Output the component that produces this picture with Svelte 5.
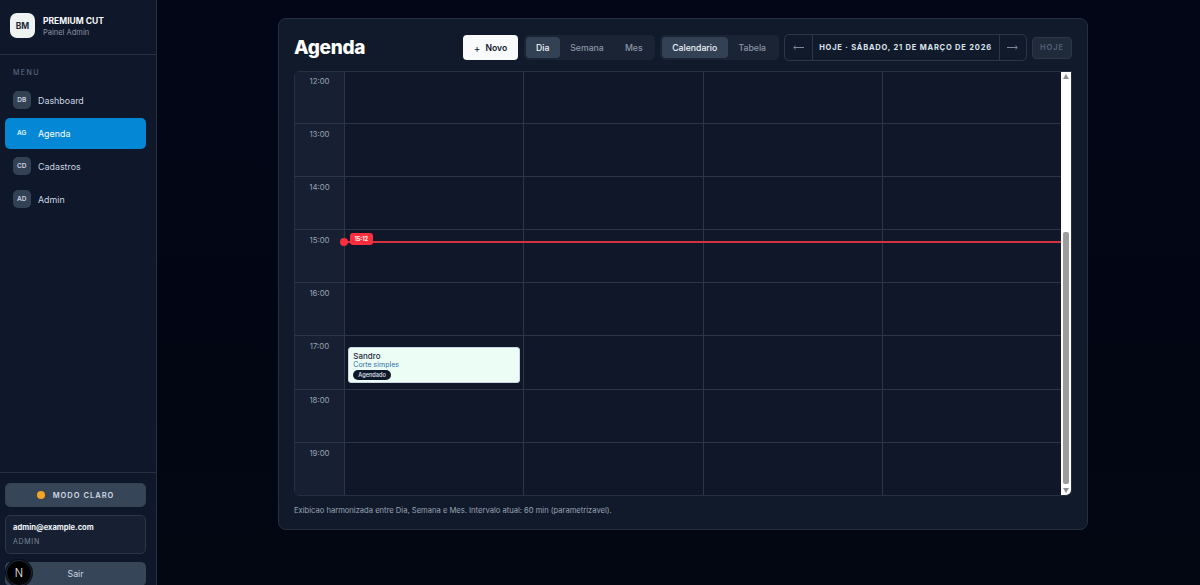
<script lang="ts">
  const nav = [
    { code: 'DB', label: 'Dashboard' },
    { code: 'AG', label: 'Agenda', active: true },
    { code: 'CD', label: 'Cadastros' },
    { code: 'AD', label: 'Admin' },
  ];
  const hours = ['12:00', '13:00', '14:00', '15:00', '16:00', '17:00', '18:00', '19:00'];
  const columns = [0, 1, 2, 3];
</script>

<div class="shell">
  <aside class="sidebar">
    <div class="brand">
      <div class="brand-logo">BM</div>
      <div>
        <div class="brand-name">PREMIUM CUT</div>
        <div class="brand-sub">Painel Admin</div>
      </div>
    </div>

    <div class="menu-title">MENU</div>
    <nav class="menu">
      {#each nav as item}
        <a class="menu-item" class:active={item.active} href="#top">
          <span class="menu-code">{item.code}</span>
          <span>{item.label}</span>
        </a>
      {/each}
    </nav>

    <div class="side-bottom">
      <button class="theme-btn"><span class="sun"></span>MODO CLARO</button>
      <div class="user-box">
        <div class="user-mail">admin@example.com</div>
        <div class="user-role">ADMIN</div>
      </div>
      <button class="logout">Sair</button>
    </div>
  </aside>

  <main class="main">
    <section class="card">
      <header class="toolbar">
        <h1>Agenda</h1>
        <div class="tools">
          <button class="new-btn"><span class="plus">+</span>Novo</button>
          <div class="segment">
            <button class="seg seg-dia on">Dia</button>
            <button class="seg seg-semana">Semana</button>
            <button class="seg seg-mes">Mes</button>
          </div>
          <div class="segment">
            <button class="seg seg-cal on">Calendario</button>
            <button class="seg seg-tab">Tabela</button>
          </div>
          <div class="date-nav">
            <button class="arrow" aria-label="Anterior">
              <svg width="11" height="5" viewBox="0 0 11 5"><path d="M11 2.5H.8M2.6.8.8 2.5l1.8 1.7" fill="none" stroke="#94a3b8" stroke-width=".8" /></svg>
            </button>
            <div class="date-label">HOJE · SÁBADO, 21 DE MARÇO DE 2026</div>
            <button class="arrow" aria-label="Proximo">
              <svg width="11" height="5" viewBox="0 0 11 5"><path d="M0 2.5h10.2M8.4.8l1.8 1.7-1.8 1.7" fill="none" stroke="#94a3b8" stroke-width=".8" /></svg>
            </button>
          </div>
          <button class="today" disabled>HOJE</button>
        </div>
      </header>

      <div class="calendar">
        <div class="viewport">
          <div class="grid">
            {#each hours as hour}
              <div class="time">{hour}</div>
              {#each columns as c}
                <div class="cell" class:last={c === 3}></div>
              {/each}
            {/each}

            <div class="now-line">
              <span class="now-dot"></span>
              <span class="now-tag">15:12</span>
            </div>

            <div class="event">
              <div class="event-name">Sandro</div>
              <div class="event-service">Corte simples</div>
              <span class="event-status">Agendado</span>
            </div>
          </div>
        </div>
        <div class="scrollbar">
          <span class="sb-up"></span>
          <div class="sb-track"><div class="sb-thumb"></div></div>
          <span class="sb-down"></span>
        </div>
      </div>

      <p class="note">Exibicao harmonizada entre Dia, Semana e Mes. Intervalo atual: 60 min (parametrizavel).</p>
    </section>
  </main>

  <div class="next-badge">N</div>
</div>

<style>
  :global(body) { margin: 0; background: #020617; font-family: Inter, "Liberation Sans", sans-serif; }
  button { font-family: inherit; cursor: pointer; }
  .shell { display: flex; width: 1200px; height: 585px; overflow: hidden; position: relative; background: linear-gradient(180deg, #020617 0%, #030712 100%); }

  .sidebar { width: 156px; height: 585px; flex: none; display: flex; flex-direction: column; background: #0f172a; border-right: 1px solid #253040; }
  .brand { height: 55px; box-sizing: border-box; padding: 13px 10px 0; display: flex; gap: 8px; border-bottom: 1px solid #253040; flex: none; }
  .brand-logo { width: 25px; height: 25px; border-radius: 7px; background: #eef2f1; color: #1e293b; display: flex; align-items: center; justify-content: center; font-size: 8.5px; font-weight: 700; }
  .brand-name { font-size: 8.5px; font-weight: 700; color: #f8fafc; line-height: 11px; margin-top: 2.5px; }
  .brand-sub { font-size: 7.5px; color: #8a95a6; line-height: 10px; margin-top: 1px; }

  .menu-title { font-size: 7px; letter-spacing: 1.5px; color: #64748b; margin: 13px 0 0 13px; line-height: 10px; }
  .menu { display: flex; flex-direction: column; gap: 2.5px; padding: 0 10px 0 5px; margin-top: 7px; }
  .menu-item { height: 30.5px; display: flex; align-items: center; gap: 7.5px; padding-left: 8px; border-radius: 5px; font-size: 8.9px; color: #cbd5e1; text-decoration: none; }
  .menu-item.active { background: #0488d6; color: #fff; }
  .menu-code { width: 17.5px; height: 18px; border-radius: 5px; background: #334155; color: #cbd5e1; font-size: 6.5px; font-weight: 600; display: flex; align-items: center; justify-content: center; }
  .menu-item.active .menu-code { background: transparent; color: #e0f2fe; }

  .side-bottom { margin-top: auto; border-top: 1px solid #253040; padding: 10px 10px 0 5px; display: flex; flex-direction: column; gap: 8px; height: 113px; box-sizing: border-box; }
  .theme-btn { height: 24px; flex: none; display: flex; align-items: center; justify-content: center; gap: 8px; background: #374558; border: 1px solid #334155; border-radius: 5px; color: #d1d9e3; font-size: 7.5px; font-weight: 600; letter-spacing: 1px; padding: 0; }
  .sun { width: 8px; height: 8px; border-radius: 50%; background: #f5a524; }
  .user-box { height: 39px; flex: none; box-sizing: border-box; border: 1px solid #2b3647; border-radius: 5px; background: #162032; padding: 7px 7px; }
  .user-mail { font-size: 7.6px; font-weight: 700; color: #f1f5f9; line-height: 10px; }
  .user-role { font-size: 7px; letter-spacing: 0.7px; color: #7c8798; line-height: 9px; margin-top: 4px; }
  .logout { height: 24px; flex: none; background: #374558; border: none; border-radius: 5px; color: #cbd5e1; font-size: 8.8px; padding: 0; margin-top: -0.5px; }

  .main { flex: 1; min-width: 0; padding: 18px 112px 0 121px; box-sizing: border-box; }
  .card { height: 512px; box-sizing: border-box; background: #111a2b; border: 1px solid #253040; border-radius: 8px; padding: 15px 15px 0; display: flex; flex-direction: column; }

  .toolbar { display: flex; align-items: center; justify-content: space-between; height: 27px; margin-bottom: 10px; flex: none; }
  h1 { margin: 0; font-size: 19px; font-weight: 800; color: #fff; letter-spacing: -0.3px; }
  .tools { display: flex; align-items: center; gap: 5px; }
  .new-btn { width: 55px; height: 25px; margin-right: 1px; background: #f8fafc; border: none; border-radius: 4px; color: #0f172a; font-size: 8.6px; font-weight: 600; padding: 0; display: flex; align-items: center; justify-content: center; gap: 5px; }
  .plus { font-size: 10px; font-weight: 400; }
  .segment { height: 25px; box-sizing: border-box; background: #1a2435; border-radius: 5px; padding: 2px; display: flex; }
  .seg { height: 21px; background: transparent; border: none; border-radius: 4px; color: #8a95a6; font-size: 8.7px; font-weight: 500; padding: 0; }
  .seg.on { background: #334155; color: #f1f5f9; }
  .seg-dia { width: 33.5px; }
  .seg-semana { width: 55px; }
  .seg-mes { width: 38.5px; }
  .seg-cal { width: 65.5px; }
  .seg-tab { width: 49.5px; }

  .date-nav { height: 27px; box-sizing: border-box; border: 1px solid #2b3647; border-radius: 5px; display: flex; align-items: stretch; }
  .arrow { width: 26.5px; background: transparent; border: none; padding: 0; display: flex; align-items: center; justify-content: center; }
  .date-label { width: 188px; box-sizing: border-box; border-left: 1px solid #2b3647; border-right: 1px solid #2b3647; display: flex; align-items: center; justify-content: center; font-size: 7.5px; font-weight: 700; letter-spacing: 0.8px; color: #dbe3ec; white-space: nowrap; }
  .today { width: 40px; height: 22px; background: #1f2a3b; border: 1px solid #2b3647; border-radius: 4px; color: #566378; font-size: 7.5px; font-weight: 600; letter-spacing: 1px; padding: 0; }

  .calendar { display: flex; height: 425px; flex: none; box-sizing: border-box; border: 1px solid #253040; border-radius: 6px 0 6px 6px; overflow: hidden; }
  .viewport { flex: 1; min-width: 0; overflow: hidden; }
  .grid { position: relative; margin-top: -1.3px; display: grid; grid-template-columns: 50px repeat(4, 179.4px); grid-auto-rows: 53.17px; }
  .time { background: #162032; border-right: 1px solid #2b3647; border-bottom: 1px solid #2b3647; color: #98a3b3; font-size: 7.8px; line-height: 10px; text-align: center; padding-top: 5px; }
  .cell { background: #0f1729; border-right: 1px solid #2b3647; border-bottom: 1px solid #2b3647; }
  .cell.last { border-right: none; }

  .now-line { position: absolute; left: 50px; right: 0; top: 170px; height: 2px; background: #d3323f; }
  .now-dot { position: absolute; left: -5px; top: -3px; width: 8px; height: 8px; border-radius: 50%; background: #ff2d3d; }
  .now-tag { position: absolute; left: 5px; top: -7.5px; width: 22.5px; height: 12px; border-radius: 3px; background: #ff2d3d; color: #fff; font-size: 5.5px; font-weight: 700; display: flex; align-items: center; justify-content: center; }

  .event { position: absolute; left: 53.3px; top: 276.6px; width: 172px; height: 35.4px; box-sizing: border-box; border-radius: 3px; background: #ecfdf5; border: 1px solid #cbd5e1; padding: 3px 4px 0; }
  .event-name { font-size: 8px; font-weight: 500; color: #1e293b; line-height: 10px; }
  .event-service { font-size: 7px; color: #2f6ea8; line-height: 8px; }
  .event-status { display: block; width: fit-content; margin-top: 1px; padding: 0 5px; height: 10px; line-height: 10px; border-radius: 5px; background: #0f172a; color: #e2e8f0; font-size: 5.6px; font-weight: 500; }

  .scrollbar { width: 10px; flex: none; background: #fff; display: flex; flex-direction: column; align-items: center; }
  .sb-up { width: 0; height: 0; margin-top: 2px; border-left: 3px solid transparent; border-right: 3px solid transparent; border-bottom: 5px solid #8f8f8f; }
  .sb-down { width: 0; height: 0; margin-bottom: 2px; border-left: 3px solid transparent; border-right: 3px solid transparent; border-top: 5px solid #8f8f8f; }
  .sb-track { flex: 1; width: 100%; display: flex; justify-content: center; padding-top: 153px; padding-bottom: 4px; box-sizing: border-box; }
  .sb-thumb { width: 5.5px; border-radius: 2px; background: #9c9c9c; }

  .note { margin: 9px 0 0; font-size: 7.6px; line-height: 11px; color: #98a3b3; }

  .next-badge { position: absolute; left: 6px; top: 560px; width: 26px; height: 26px; border-radius: 50%; background: #000; border: 1px solid #1f2937; box-sizing: border-box; color: #f1f5f9; font-size: 11px; font-weight: 300; display: flex; align-items: center; justify-content: center; box-shadow: 0 0 0 1px #0b0f18; }
</style>
